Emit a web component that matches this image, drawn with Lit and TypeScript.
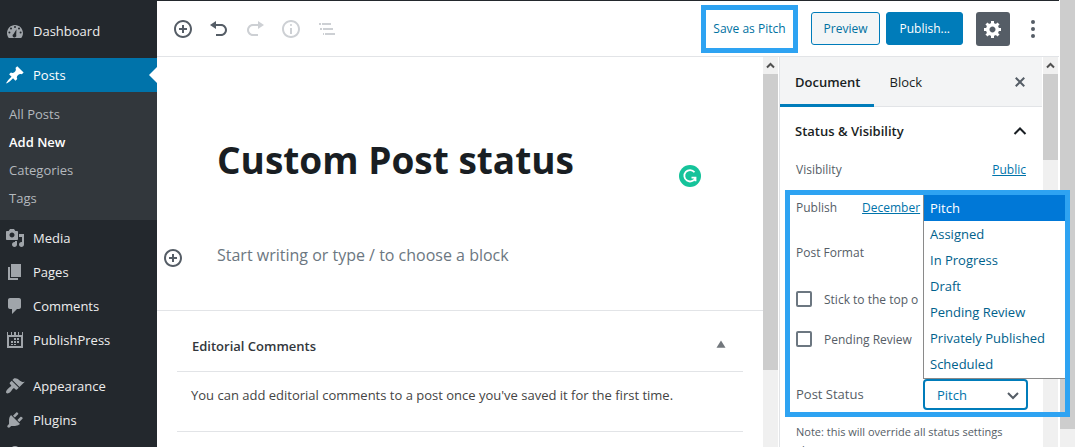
import { LitElement, html, css, svg, nothing } from "lit";
import { customElement, property, state } from "lit/decorators.js";
import { classMap } from "lit/directives/class-map.js";

const icons: Record<string, unknown> = {
  dashboard: svg`<path fill-rule="evenodd" d="M3.8 17h12.4c1.1-1.4 1.8-3.1 1.8-5 0-4.400-3.600-8-8-8s-8 3.600-8 8c0 1.900.7 3.600 1.800 5zM10 5a1 1 0 1 1 0 2 1 1 0 0 1 0-2zM6 6.500a1 1 0 1 1 0 2 1 1 0 0 1 0-2zM14 6.500a1 1 0 1 1 0 2 1 1 0 0 1 0-2zM4.400 10.500a1 1 0 1 1 0 2 1 1 0 0 1 0-2zM15.600 10.500a1 1 0 1 1 0 2 1 1 0 0 1 0-2zM11.500 8.200l-.3 5.600a1.900 1.900 0 1 1-2.600-.9z"/>`,
  pin: svg`<path d="M10.44 3.02l1.82-1.82 6.36 6.35-1.83 1.82c-1.05-.68-2.48-.57-3.41.36l-.75.75c-.92.93-1.04 2.35-.35 3.41l-1.83 1.82-2.41-2.41-2.8 2.79c-.42.42-3.38 2.71-3.8 2.29s1.86-3.39 2.28-3.81l2.79-2.79L4.1 9.36l1.83-1.82c1.05.69 2.48.57 3.4-.36l.75-.75c.93-.92 1.05-2.35.36-3.41z"/>`,
  media: svg`<path d="M13 11V4c0-.55-.45-1-1-1h-1.67L9 1H5L3.67 3H2c-.55 0-1 .45-1 1v7c0 .55.45 1 1 1h10c.55 0 1-.45 1-1zM7 4.5c1.38 0 2.5 1.12 2.5 2.5S8.38 9.5 7 9.5 4.500 8.380 4.500 7 5.620 4.500 7 4.500zM14 6h5v10.500c0 1.380-1.120 2.500-2.500 2.500S14 17.880 14 16.500s1.120-2.500 2.500-2.500c.17 0 .34.02.5.05V9h-3V6zm-4 8.050V13h2v3.500c0 1.380-1.120 2.500-2.500 2.500S7 17.880 7 16.500 8.120 14 9.500 14c.17 0 .34.02.5.05z"/>`,
  page: svg`<path d="M6 15V2h10v13H6zm-1 1h8v2H3V5h2v11z"/>`,
  comment: svg`<path d="M5 2h9c1.100 0 2 .9 2 2v7c0 1.100-.9 2-2 2h-2l-5 5v-5H5c-1.100 0-2-.9-2-2V4c0-1.100.9-2 2-2z"/>`,
  calendar: svg`<path fill-rule="evenodd" d="M2 2h1v3h3V2h1v3h2V2h2v3h2V2h1v3h3V2h1v16H2zM4 7v9h12V7z"/><path d="M9 8h2v2H9zM12 8h2v2h-2zM6 11h2v2H6zM9 11h2v2H9zM12 11h2v2h-2zM6 14h2v1H6zM9 14h2v1H9z"/>`,
  brush: svg`<path d="M14.480 11.060L7.410 3.990l1.500-1.500c.5-.56 2.300-.47 3.510.32 1.210.8 1.430 1.280 2.910 2.100 1.180.64 2.450 1.260 4.450.85zm-.71.71L6.700 4.700 4.930 6.470c-.39.39-.39 1.020 0 1.410l1.060 1.060c.39.39.39 1.030 0 1.420-.6.6-1.430 1.110-2.210 1.690-.35.26-.7.53-1.010.84C1.430 14.230.4 16.080 1.400 17.070c.99 1 2.840-.03 4.180-1.360.31-.31.58-.66.85-1.020.57-.78 1.080-1.610 1.690-2.210.39-.39 1.020-.39 1.410 0l1.060 1.060c.39.39 1.020.39 1.410 0z"/>`,
  plug: svg`<path d="M13.110 4.360L9.870 7.600 8 5.730l3.240-3.240c.35-.34 1.050-.2 1.560.32.52.51.66 1.210.31 1.550zm-8 1.770l.91-1.120 9.010 9.010-1.190.84c-.71.71-2.630 1.160-3.820 1.160H6.140L4.900 17.260c-.59.59-1.540.59-2.120 0-.59-.58-.59-1.530 0-2.120l1.240-1.240v-3.880c0-1.130.4-3.190 1.090-3.890zm7.260 3.970l3.240-3.240c.34-.35 1.040-.21 1.550.31.52.51.66 1.210.31 1.550l-3.240 3.250z"/>`,
  user: svg`<circle cx="10" cy="6" r="4"/><path d="M3 18c0-4 2-7 7-7s7 3 7 7z"/>`,
  insert: svg`<path d="M10 1c-5 0-9 4-9 9s4 9 9 9 9-4 9-9-4-9-9-9zm0 16c-3.900 0-7-3.100-7-7s3.100-7 7-7 7 3.100 7 7-3.100 7-7 7zm1-11H9v3H6v2h3v3h2v-3h3V9h-3V6z"/>`,
  undo: svg`<path d="M12 5H7V2L1 6l6 4V7h5c2.200 0 4 1.800 4 4s-1.800 4-4 4H7v2h5c3.300 0 6-2.700 6-6s-2.700-6-6-6z"/>`,
  redo: svg`<path d="M8 5h5V2l6 4-6 4V7H8c-2.200 0-4 1.800-4 4s1.800 4 4 4h5v2H8c-3.300 0-6-2.700-6-6s2.700-6 6-6z"/>`,
  info: svg`<path d="M9 15h2V9H9v6zm1-10c-.5 0-1 .5-1 1s.5 1 1 1 1-.5 1-1-.5-1-1-1zm0-4c-5 0-9 4-9 9s4 9 9 9 9-4 9-9-4-9-9-9zm0 16c-3.900 0-7-3.100-7-7s3.100-7 7-7 7 3.100 7 7-3.100 7-7 7z"/>`,
  outline: svg`<path d="M2 4h2v2H2zM5 4h9v2H5zM3 9h2v2H3zM6 9h10v2H6zM6 14h1v2H6zM8 14h10v2H8z"/>`,
  gear: svg`<path fill-rule="evenodd" d="M18 12h-2.180c-.17.7-.44 1.350-.81 1.930l1.540 1.540-2.100 2.100-1.540-1.540c-.58.36-1.230.63-1.910.79V19H8v-2.180c-.68-.16-1.330-.43-1.910-.79l-1.540 1.540-2.120-2.120 1.540-1.540c-.36-.58-.63-1.230-.79-1.910H1V9.030h2.170c.16-.7.44-1.350.8-1.940L2.430 5.550l2.100-2.100 1.540 1.540c.58-.37 1.240-.64 1.930-.81V2h3v2.180c.68.16 1.330.43 1.910.79l1.540-1.540 2.120 2.120-1.540 1.540c.36.59.64 1.240.8 1.940H18V12zm-8.500 1.500c1.660 0 3-1.340 3-3s-1.340-3-3-3-3 1.340-3 3 1.340 3 3 3z"/>`,
  more: svg`<circle cx="10" cy="3" r="2"/><circle cx="10" cy="10" r="2"/><circle cx="10" cy="17" r="2"/>`,
  close: svg`<path d="M14.950 6.460L11.410 10l3.540 3.540-1.410 1.410L10 11.420l-3.530 3.530-1.420-1.420L8.580 10 5.050 6.470l1.420-1.420L10 8.580l3.540-3.530z"/>`,
  chevronUp: svg`<path d="M4.500 13L10 7.500l5.500 5.500" fill="none" stroke="currentColor" stroke-width="2"/>`,
  chevronDown: svg`<path d="M5 8l5 5 5-5" fill="none" stroke="currentColor" stroke-width="2"/>`,
  triangle: svg`<path d="M10 4l5 8H5z"/>`,
};

@customElement("wp-icon")
class WpIcon extends LitElement {
  @property() name = "";

  static styles = css`
    :host {
      display: block;
      flex: none;
      width: 20px;
      height: 20px;
    }
    svg {
      display: block;
      width: 100%;
      height: 100%;
      fill: currentColor;
    }
  `;

  render() {
    return html`<svg viewBox="0 0 20 20" aria-hidden="true">${icons[this.name]}</svg>`;
  }
}

@customElement("scroll-rail")
class ScrollRail extends LitElement {
  static styles = css`
    :host {
      display: flex;
      flex-direction: column;
      flex: none;
      width: 15px;
      background: #f0f0f0;
    }
    .arrow {
      display: grid;
      place-items: center;
      height: 17px;
      color: #505050;
    }
    .arrow svg {
      width: 9px;
      height: 7px;
    }
    .thumb {
      background: #cdcdcd;
    }
  `;

  @property({ type: Number }) share = 50;
  @property({ type: Boolean }) arrow = false;

  render() {
    return html`
      ${this.arrow
        ? html`<div class="arrow">
            <svg viewBox="0 0 9 7" aria-hidden="true">
              <path d="M1 5.500L4.500 2 8 5.500" fill="none" stroke="currentColor" stroke-width="2" />
            </svg>
          </div>`
        : nothing}
      <div class="thumb" style="height:${this.share}%"></div>
    `;
  }
}

@customElement("admin-menu")
class AdminMenu extends LitElement {
  static styles = css`
    :host {
      display: block;
      flex: none;
      width: 157px;
      padding-top: 14px;
      box-sizing: border-box;
      background: #23282d;
      font-size: 13px;
    }
    a {
      color: inherit;
      text-decoration: none;
    }
    .item {
      position: relative;
      display: flex;
      align-items: center;
      gap: 8px;
      height: 34px;
      padding-left: 5px;
      color: #eee;
    }
    .item wp-icon {
      color: #a0a5aa;
    }
    .spaced {
      margin-top: 12px;
    }
    .item.current {
      margin-top: 10px;
      background: #0073aa;
      color: #fff;
    }
    .item.current wp-icon {
      color: #fff;
    }
    .current::after {
      content: "";
      position: absolute;
      right: 0;
      top: 9px;
      border: 8px solid transparent;
      border-left: 0;
      border-right-color: #fff;
    }
    .submenu {
      margin: 0 0 1px;
      padding: 8px 9px;
      list-style: none;
      background: #32373c;
      line-height: 28px;
      color: #b4b9be;
    }
    .active {
      color: #fff;
      font-weight: 600;
    }
  `;

  private item(icon: string, label: string, extra = "") {
    return html`<a class="item ${extra}" href="#"><wp-icon name=${icon}></wp-icon>${label}</a>`;
  }

  render() {
    return html`<nav aria-label="Main menu">
      ${this.item("dashboard", "Dashboard")} ${this.item("pin", "Posts", "current")}
      <ul class="submenu">
        ${["All Posts", "Add New", "Categories", "Tags"].map(
          (label) =>
            html`<li><a href="#" class=${classMap({ active: label === "Add New" })}>${label}</a></li>`
        )}
      </ul>
      ${this.item("media", "Media")} ${this.item("page", "Pages")} ${this.item("comment", "Comments")}
      ${this.item("calendar", "PublishPress")} ${this.item("brush", "Appearance", "spaced")}
      ${this.item("plug", "Plugins")}
      <a class="item" href="#" aria-label="Users"><wp-icon name="user"></wp-icon></a>
    </nav>`;
  }
}

@customElement("editor-header")
class EditorHeader extends LitElement {
  static styles = css`
    :host {
      display: flex;
      align-items: center;
      justify-content: space-between;
      flex: none;
      height: 56px;
      box-sizing: border-box;
      padding: 0 16px;
      border-bottom: 1px solid #e2e4e7;
      background: #fff;
      font-size: 12px;
    }
    .tools,
    .actions {
      display: flex;
      align-items: center;
    }
    .tools {
      gap: 16px;
    }
    button {
      display: grid;
      place-items: center;
      margin: 0;
      padding: 0;
      border: 0;
      background: none;
      color: #555d66;
      font: inherit;
    }
    .tools button:disabled {
      color: #cdd0d4;
    }
    .save {
      height: 48px;
      margin-right: 13px;
      padding: 0 7px;
      border: 5px solid #2ea3f2;
      color: #0071a1;
    }
    .preview,
    .publish {
      height: 33px;
      margin-right: 6px;
      padding: 0 12px;
      border: 1px solid #007cba;
      border-radius: 3px;
      background: #f3f5f6;
      color: #0071a1;
    }
    .publish {
      margin-right: 13px;
      background: #007cba;
      color: #fff;
    }
    .settings {
      width: 34px;
      height: 34px;
      margin-right: 13px;
      border-radius: 3px;
      background: #555d66;
      color: #fff;
    }
  `;

  render() {
    return html`
      <div class="tools">
        <button aria-label="Add block"><wp-icon name="insert"></wp-icon></button>
        <button aria-label="Undo"><wp-icon name="undo"></wp-icon></button>
        <button aria-label="Redo" disabled><wp-icon name="redo"></wp-icon></button>
        <button aria-label="Content structure" disabled><wp-icon name="info"></wp-icon></button>
        <button aria-label="Block navigation" disabled><wp-icon name="outline"></wp-icon></button>
      </div>
      <div class="actions">
        <button class="save">Save as Pitch</button>
        <button class="preview">Preview</button>
        <button class="publish">Publish...</button>
        <button class="settings" aria-label="Settings"><wp-icon name="gear"></wp-icon></button>
        <button aria-label="More tools"><wp-icon name="more"></wp-icon></button>
      </div>
    `;
  }
}

@customElement("post-canvas")
class PostCanvas extends LitElement {
  static styles = css`
    :host {
      display: block;
      flex: 1;
      min-width: 0;
      color: #444;
    }
    .writing {
      padding: 76px 62px 42px 6px;
      border-bottom: 1px solid #e2e4e7;
    }
    .title-row {
      display: flex;
      align-items: center;
      padding-left: 54px;
    }
    input {
      flex: 1;
      min-width: 0;
      padding: 0;
      border: 0;
      outline: 0;
      background: none;
      font-family: inherit;
    }
    .title {
      height: 52px;
      color: #191e23;
      font-size: 37px;
      font-weight: 700;
    }
    .grammar {
      flex: none;
      align-self: flex-end;
      width: 22px;
      height: 22px;
      margin-bottom: -2px;
    }
    .block-row {
      display: flex;
      align-items: flex-end;
      gap: 34px;
      margin-top: 57px;
    }
    .insert {
      padding: 0;
      border: 0;
      background: none;
      color: #555d66;
    }
    .block {
      height: 26px;
      font-size: 16px;
    }
    .block::placeholder {
      color: #6c7781;
      opacity: 1;
    }
    .metabox {
      margin: 0 20px;
    }
    .heading {
      display: flex;
      align-items: center;
      justify-content: space-between;
      height: 61px;
      padding: 10px 13px 0 15px;
      box-sizing: border-box;
      border-bottom: 1px solid #e2e4e7;
    }
    h2 {
      margin: 0;
      font-size: 13px;
      font-weight: 600;
      color: #32373c;
    }
    .heading wp-icon {
      width: 18px;
      height: 18px;
      color: #72777c;
    }
    p {
      margin: 0;
      padding: 13px 14px 26px;
      border-bottom: 1px solid #e2e4e7;
      line-height: 20px;
    }
  `;

  render() {
    return html`
      <section class="writing">
        <div class="title-row">
          <input class="title" aria-label="Post title" .value=${"Custom Post status"} />
          <svg class="grammar" viewBox="0 0 22 22" aria-hidden="true">
            <circle cx="11" cy="11" r="11" fill="#15c39a" />
            <path
              d="M15.500 7.200A5.700 5.700 0 1 0 16.300 13M12.500 12.700h4v3.500"
              fill="none"
              stroke="#fff"
              stroke-width="1.800"
            />
          </svg>
        </div>
        <div class="block-row">
          <button class="insert" aria-label="Add block"><wp-icon name="insert"></wp-icon></button>
          <input
            class="block"
            aria-label="Block text"
            placeholder="Start writing or type / to choose a block"
          />
        </div>
      </section>
      <section class="metabox">
        <div class="heading">
          <h2>Editorial Comments</h2>
          <wp-icon name="triangle"></wp-icon>
        </div>
        <p>You can add editorial comments to a post once you've saved it for the first time.</p>
      </section>
    `;
  }
}

const statuses = [
  "Pitch",
  "Assigned",
  "In Progress",
  "Draft",
  "Pending Review",
  "Privately Published",
  "Scheduled",
];

@customElement("document-panel")
class DocumentPanel extends LitElement {
  @state() private status = "Pitch";

  static styles = css`
    :host {
      display: block;
      flex: none;
      width: 262px;
      color: #555d66;
      font-size: 12px;
      border-right: 1px solid #fff;
    }
    button {
      margin: 0;
      padding: 0;
      border: 0;
      background: none;
      color: inherit;
      font: inherit;
    }
    .tabs {
      display: flex;
      align-items: stretch;
      height: 50px;
      box-sizing: border-box;
      padding-right: 12px;
      background: #f3f4f5;
      border-bottom: 1px solid #e2e4e7;
      color: #191e23;
      font-size: 13px;
    }
    .tab {
      padding: 3px 14px 0 15px;
      border-bottom: 3px solid transparent;
      margin-bottom: -1px;
    }
    .selected {
      border-color: #007cba;
      font-weight: 600;
    }
    .close {
      margin-left: auto;
      color: #555d66;
    }
    .section {
      display: flex;
      align-items: center;
      justify-content: space-between;
      width: 100%;
      height: 48px;
      padding: 0 12px 0 15px;
      color: #191e23;
      font-size: 13px;
      font-weight: 600;
    }
    .row {
      display: flex;
      align-items: center;
      justify-content: space-between;
      padding: 0 16px;
    }
    a {
      color: #0073aa;
    }
    .visibility {
      height: 29px;
      padding-bottom: 6px;
    }
    .highlight {
      position: relative;
    }
    .highlight::after {
      content: "";
      position: absolute;
      z-index: 3;
      inset: 0 -28px 0 5px;
      border: 5px solid #2ea3f2;
      pointer-events: none;
    }
    .publish {
      justify-content: flex-start;
      gap: 25px;
      height: 35px;
    }
    .format {
      height: 54px;
    }
    .check {
      justify-content: flex-start;
      gap: 12px;
      height: 40px;
    }
    .check input {
      appearance: none;
      flex: none;
      width: 16px;
      height: 16px;
      margin: 0;
      border: 2px solid #6c7781;
      border-radius: 2px;
      background: #fff;
    }
    .post-status {
      align-items: flex-end;
      height: 58px;
      padding-right: 14px;
      padding-bottom: 7px;
      box-sizing: border-box;
      font-size: 13px;
      font-weight: 500;
    }
    .post-status label {
      line-height: 31px;
    }
    .picker {
      position: relative;
      width: 105px;
    }
    select {
      appearance: none;
      display: block;
      width: 100%;
      height: 31px;
      padding: 0 12px;
      border: 2px solid #007cba;
      border-radius: 4px;
      background: #fff;
      color: #0073aa;
      font: inherit;
      font-weight: 400;
    }
    .picker wp-icon {
      position: absolute;
      right: 5px;
      top: 6px;
      pointer-events: none;
    }
    .menu {
      position: absolute;
      z-index: 2;
      left: 0;
      bottom: 100%;
      width: 142px;
      box-sizing: border-box;
      margin: 0;
      padding: 0 0 1px;
      list-style: none;
      border-left: 1px solid #8a8a8a;
      border-bottom: 1px solid #8a8a8a;
      background: #fff;
      color: #00618c;
      font-weight: 400;
      line-height: 26px;
      white-space: nowrap;
    }
    .menu li {
      padding-left: 6px;
    }
    .menu .chosen {
      background: #0078d7;
      color: #fff;
    }
    .note {
      margin: 0;
      padding: 6px 36px 6px 16px;
      font-size: 11px;
      line-height: 18px;
    }
  `;

  render() {
    return html`
      <div class="tabs">
        <button class="tab selected">Document</button>
        <button class="tab">Block</button>
        <button class="close" aria-label="Close settings"><wp-icon name="close"></wp-icon></button>
      </div>
      <button class="section">Status &amp; Visibility<wp-icon name="chevronUp"></wp-icon></button>
      <div class="row visibility"><span>Visibility</span><a href="#">Public</a></div>
      <div class="highlight">
        <div class="row publish"><span>Publish</span><a href="#">December</a></div>
        <div class="row format">Post Format</div>
        <label class="row check"><input type="checkbox" /><span>Stick to the top o</span></label>
        <label class="row check"><input type="checkbox" /><span>Pending Review</span></label>
        <div class="row post-status">
          <label for="status">Post Status</label>
          <div class="picker">
            <select
              id="status"
              .value=${this.status}
              @change=${(e: Event) => (this.status = (e.target as HTMLSelectElement).value)}
            >
              ${statuses.map((s) => html`<option>${s}</option>`)}
            </select>
            <wp-icon name="chevronDown"></wp-icon>
            <ul class="menu" role="listbox" aria-label="Post Status">
              ${statuses.map(
                (s) => html`<li
                  role="option"
                  aria-selected=${s === this.status}
                  class=${classMap({ chosen: s === this.status })}
                  @click=${() => (this.status = s)}
                >
                  ${s}
                </li>`
              )}
            </ul>
          </div>
        </div>
      </div>
      <p class="note">Note: this will override all status settings above.</p>
    `;
  }
}

@customElement("app-root")
class AppRoot extends LitElement {
  static styles = css`
    :host {
      display: flex;
      height: 100vh;
      overflow: hidden;
      background: #fff;
      font-family: "Open Sans", "Noto Sans", sans-serif;
      font-size: 13px;
    }
    .main {
      display: flex;
      flex-direction: column;
      flex: 1;
      min-width: 0;
      border-top: 1px solid #23282d;
    }
    .body {
      display: flex;
      flex: 1;
      min-height: 0;
      padding-right: 1px;
    }
    .divider {
      flex: none;
      width: 2px;
      box-sizing: border-box;
      border-right: 1px solid #e2e4e7;
    }
    .page-rail {
      margin: 0 1px;
    }
  `;

  render() {
    return html`
      <admin-menu></admin-menu>
      <div class="main">
        <editor-header></editor-header>
        <div class="body">
          <post-canvas></post-canvas>
          <scroll-rail arrow share="76"></scroll-rail>
          <div class="divider"></div>
          <document-panel></document-panel>
          <scroll-rail arrow share="22"></scroll-rail>
        </div>
      </div>
      <scroll-rail class="page-rail" share="96"></scroll-rail>
    `;
  }
}
